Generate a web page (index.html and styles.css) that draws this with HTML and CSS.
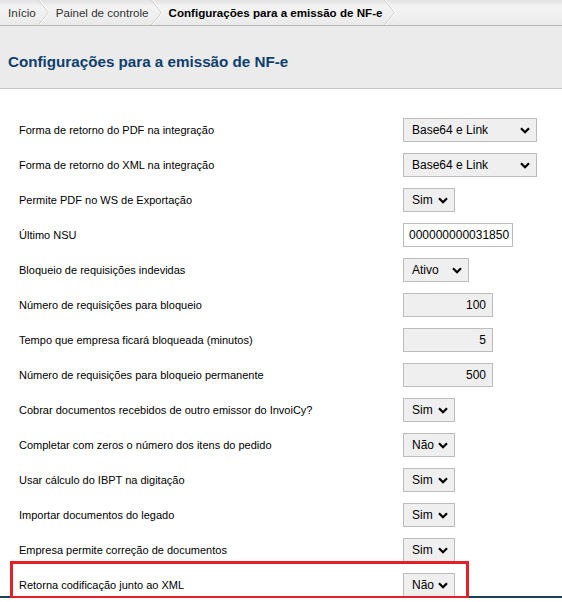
FILE: index.html
```html
<!DOCTYPE html>
<html lang="pt-BR">
<head>
<meta charset="utf-8">
<title>Configurações para a emissão de NF-e</title>
<link rel="stylesheet" href="styles.css">
</head>
<body>
<nav class="crumbs">
  <span class="crumb">Início</span>
  <svg class="sep" width="12" height="25" viewBox="0 0 12 25"><polyline points="0.5,0 10.5,12.5 0.5,25" fill="none" stroke="#c9c9c9" stroke-width="1"/><polyline points="1.5,0 11.5,12.5 1.5,25" fill="none" stroke="#ffffff" stroke-width="1"/></svg>
  <span class="crumb">Painel de controle</span>
  <svg class="sep" width="12" height="25" viewBox="0 0 12 25"><polyline points="0.5,0 10.5,12.5 0.5,25" fill="none" stroke="#c9c9c9" stroke-width="1"/><polyline points="1.5,0 11.5,12.5 1.5,25" fill="none" stroke="#ffffff" stroke-width="1"/></svg>
  <span class="crumb current">Configurações para a emissão de NF-e</span>
  <svg class="sep" width="12" height="25" viewBox="0 0 12 25"><polyline points="0.5,0 10.5,12.5 0.5,25" fill="none" stroke="#c9c9c9" stroke-width="1"/><polyline points="1.5,0 11.5,12.5 1.5,25" fill="none" stroke="#ffffff" stroke-width="1"/></svg>
</nav>
<header class="page-head">
  <h1 class="title">Configurações para a emissão de NF-e</h1>
</header>
<main class="form">
  <div class="row"><label class="lbl">Forma de retorno do PDF na integração</label><select class="sel w134"><option>Base64 e Link</option></select></div>
  <div class="row"><label class="lbl">Forma de retorno do XML na integração</label><select class="sel w134"><option>Base64 e Link</option></select></div>
  <div class="row"><label class="lbl">Permite PDF no WS de Exportação</label><select class="sel w52"><option>Sim</option></select></div>
  <div class="row"><label class="lbl">Último NSU</label><input class="txt w110" value="000000000031850"></div>
  <div class="row"><label class="lbl">Bloqueio de requisições indevidas</label><select class="sel w66"><option>Ativo</option></select></div>
  <div class="row"><label class="lbl">Número de requisições para bloqueio</label><input class="num" value="100"></div>
  <div class="row"><label class="lbl">Tempo que empresa ficará bloqueada (minutos)</label><input class="num" value="5"></div>
  <div class="row"><label class="lbl">Número de requisições para bloqueio permanente</label><input class="num" value="500"></div>
  <div class="row"><label class="lbl">Cobrar documentos recebidos de outro emissor do InvoiCy?</label><select class="sel w52"><option>Sim</option></select></div>
  <div class="row"><label class="lbl">Completar com zeros o número dos itens do pedido</label><select class="sel w52"><option>Não</option></select></div>
  <div class="row"><label class="lbl">Usar cálculo do IBPT na digitação</label><select class="sel w52"><option>Sim</option></select></div>
  <div class="row"><label class="lbl">Importar documentos do legado</label><select class="sel w52"><option>Sim</option></select></div>
  <div class="row"><label class="lbl">Empresa permite correção de documentos</label><select class="sel w52"><option>Sim</option></select></div>
  <div class="row row-last highlight"><label class="lbl">Retorna codificação junto ao XML</label><select class="sel w52"><option>Não</option></select></div>
</main>
<footer class="foot"></footer>
</body>
</html>
```

FILE: styles.css
```css
html, body {
  margin: 0;
  padding: 0;
  background: #ffffff;
  font-family: "Liberation Sans", Arial, sans-serif;
  color: #000;
}

.crumbs {
  display: flex;
  align-items: center;
  height: 25px;
  padding-left: 8px;
  background: linear-gradient(#e2e2e2 0, #f3f3f3 25%, #efefef 70%, #e9e9e9 100%);
  border-bottom: 1px solid #b9b9b9;
  font-size: 11.6px;
}

.crumb {
  color: #333;
  line-height: 25px;
  padding-right: 2px;
}

.crumb.current {
  color: #000;
  font-weight: bold;
}

.sep {
  display: block;
  flex: none;
  margin-right: 6px;
}

.page-head {
  height: 63px;
  box-sizing: border-box;
  padding: 26px 0 0 8px;
  background: #ebebeb;
  border-bottom: 1px solid #c6c6c6;
}

.title {
  margin: 0;
  font-size: 15.2px;
  line-height: 20px;
  font-weight: bold;
  color: #0e3e6d;
}

.form {
  padding-top: 23px;
}

.row {
  display: flex;
  align-items: flex-start;
  height: 35px;
  box-sizing: border-box;
  padding: 6px 0 0 19px;
  position: relative;
}

.row-last {
  height: 29px;
}

.highlight::after {
  content: "";
  position: absolute;
  left: 10px;
  top: -6px;
  width: 459px;
  height: 38px;
  box-sizing: border-box;
  border: 3px solid #e51f28;
  z-index: 2;
  pointer-events: none;
}

.lbl {
  width: 384px;
  flex: none;
  font-size: 11px;
  line-height: 24px;
  color: #000;
}

.sel {
  -webkit-appearance: none;
  appearance: none;
  height: 24px;
  box-sizing: border-box;
  border: 1px solid #bcbcbc;
  border-radius: 0;
  background-color: #efefef;
  background-image: url("data:image/svg+xml;utf8,<svg xmlns='http://www.w3.org/2000/svg' width='10' height='7' viewBox='0 0 10 7'><polyline points='1,1.2 5,5.2 9,1.2' fill='none' stroke='%23000' stroke-width='2.2'/></svg>");
  background-repeat: no-repeat;
  background-position: right 6px center;
  font-family: "Liberation Sans", Arial, sans-serif;
  font-size: 12px;
  color: #000;
  padding: 0 0 0 8px;
  margin: 0;
}

.w134 { width: 134px; }
.w52 { width: 52px; }
.w66 { width: 66px; }

.txt, .num {
  height: 24px;
  box-sizing: border-box;
  border: 1px solid #bcbcbc;
  border-radius: 0;
  font-family: "Liberation Sans", Arial, sans-serif;
  font-size: 12px;
  color: #000;
  margin: 0;
}

.txt {
  background: #ffffff;
  padding: 0 0 0 5px;
}

.w110 { width: 110px; }

.num {
  width: 90px;
  background: #efefef;
  text-align: right;
  padding: 0 6px 0 0;
}

.foot {
  height: 0;
  border-top: 2px solid #1d3e56;
}
```
